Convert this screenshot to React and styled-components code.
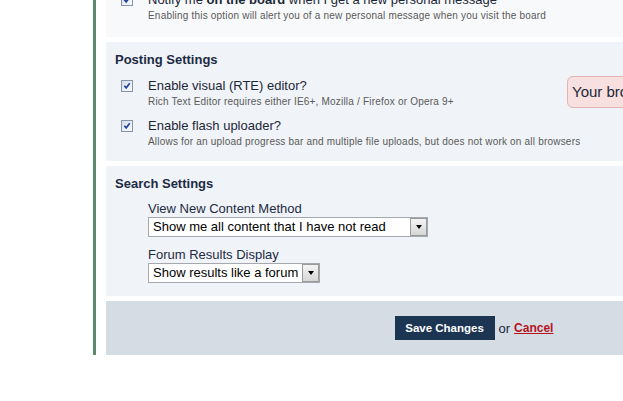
import React from "react";
import styled, { createGlobalStyle } from "styled-components";

const Global = createGlobalStyle`
  html, body { margin: 0; padding: 0; background: #fff; overflow: hidden; }
  body { font-family: "Liberation Sans", Arial, sans-serif; color: #1c2837; }
`;

const Page = styled.div`
  display: flex;
  align-items: flex-start;
  width: 900px;
  height: 401px;
`;

const Gutter = styled.div`
  width: 93px;
  flex: none;
`;

const Main = styled.div`
  border-left: 3px solid #5a8c6c;
  padding-left: 10px;
  width: 736px;
  margin-top: -49px;
  display: flex;
  flex-direction: column;
  gap: 5px;
`;

const Panel = styled.section`
  background: ${(p) => p.$bg || "#f0f3f7"};
  padding: ${(p) => p.$pad || "9px 0 12px 9px"};
  display: flex;
  flex-direction: column;
  position: relative;
`;

const Heading = styled.h3`
  margin: 0 0 8px 0;
  font-size: 13px;
  line-height: 18px;
  font-weight: bold;
  color: #1c2b44;
`;

const Rows = styled.div`
  display: flex;
  flex-direction: column;
  gap: 8px;
`;

const Row = styled.div`
  display: flex;
  align-items: flex-start;
  gap: 15px;
  padding-left: 6px;
`;

const Check = styled.span`
  flex: none;
  margin-top: 3px;
  width: 10px;
  height: 10px;
  border: 1px solid #8493ad;
  background: linear-gradient(135deg, #d5dbe6 0%, #eef1f6 60%, #fbfcfd 100%);
  display: flex;
  align-items: center;
  justify-content: center;
`;

const RowText = styled.div`
  display: flex;
  flex-direction: column;
`;

const Label = styled.div`
  font-size: 13px;
  line-height: 18px;
  color: #1c2837;
  b { font-weight: bold; }
`;

const Sub = styled.div`
  font-size: 10px;
  line-height: 14px;
  color: #5a5a5a;
  letter-spacing: 0.2px;
`;

const Notice = styled.div`
  position: absolute;
  left: 461px;
  top: 34px;
  height: 30px;
  padding: 0 10px 0 4px;
  border: 1px solid #e3b3b6;
  border-radius: 6px;
  background: #f8dfe0;
  font-size: 15px;
  line-height: 30px;
  color: #1c2837;
  white-space: nowrap;
`;

const Field = styled.div`
  padding-left: 33px;
  display: flex;
  flex-direction: column;
  align-items: flex-start;
  margin-bottom: ${(p) => (p.$last ? "0" : "10px")};
`;

const FieldLabel = styled.div`
  font-size: 13px;
  line-height: 16px;
  color: #1c2b44;
`;

const Select = styled.div`
  display: flex;
  align-items: stretch;
  justify-content: space-between;
  width: ${(p) => p.$width}px;
  box-sizing: border-box;
  height: 20px;
  border: 1px solid #a5a9ae;
  background: #fff;
`;

const SelectText = styled.span`
  font-size: 13px;
  line-height: 18px;
  padding: 0 4px 0 4px;
  color: #000;
  white-space: nowrap;
`;

const Arrow = styled.span`
  width: 15px;
  flex: none;
  border: 1px solid #9a9a9a;
  background: linear-gradient(#f4f4f4, #d6d6d6);
  display: flex;
  align-items: center;
  justify-content: center;
  &::after {
    content: "";
    border-left: 3.5px solid transparent;
    border-right: 3.5px solid transparent;
    border-top: 4px solid #000;
  }
`;

const Footer = styled.div`
  background: #d5dce4;
  height: 54px;
  display: flex;
  align-items: center;
  justify-content: center;
  gap: 4px;
`;

const SaveButton = styled.button`
  height: 24px;
  width: 100px;
  background: #1c3553;
  color: #fff;
  border: none;
  font-family: inherit;
  font-weight: bold;
  font-size: 11.5px;
  padding: 0;
  cursor: pointer;
`;

const Or = styled.span`
  color: #1c2837;
  font-size: 13px;
`;

const Cancel = styled.a`
  color: #b5151f;
  font-weight: bold;
  font-size: 12px;
  text-decoration: underline;
`;

const Tick = () => (
  <svg width="8" height="8" viewBox="0 0 9 9">
    <path d="M1.5 4.2 L3.6 6.6 L7.6 1.4" fill="none" stroke="#2743a0" strokeWidth="1.9" />
  </svg>
);

const CheckRow = ({ label, sub }) => (
  <Row>
    <Check><Tick /></Check>
    <RowText>
      <Label>{label}</Label>
      <Sub>{sub}</Sub>
    </RowText>
  </Row>
);

export default function App() {
  return (
    <>
      <Global />
      <Page>
        <Gutter />
        <Main>
          <Panel $bg="#f8f9fb" $pad="0 0 14px 9px">
            <Rows>
              <CheckRow
                label="Some option"
                sub="Description"
              />
              <CheckRow
                label={<>Notify me <b>on the board</b> when I get a new personal message</>}
                sub="Enabling this option will alert you of a new personal message when you visit the board"
              />
            </Rows>
          </Panel>
          <Panel>
            <Heading>Posting Settings</Heading>
            <Rows>
              <CheckRow
                label="Enable visual (RTE) editor?"
                sub="Rich Text Editor requires either IE6+, Mozilla / Firefox or Opera 9+"
              />
              <CheckRow
                label="Enable flash uploader?"
                sub="Allows for an upload progress bar and multiple file uploads, but does not work on all browsers"
              />
            </Rows>
            <Notice>Your browser does not support the rich text editor</Notice>
          </Panel>
          <Panel $pad="9px 0 13px 9px">
            <Heading>Search Settings</Heading>
            <Field>
              <FieldLabel>View New Content Method</FieldLabel>
              <Select $width={280}>
                <SelectText>Show me all content that I have not read</SelectText>
                <Arrow />
              </Select>
            </Field>
            <Field $last>
              <FieldLabel>Forum Results Display</FieldLabel>
              <Select $width={172}>
                <SelectText>Show results like a forum</SelectText>
                <Arrow />
              </Select>
            </Field>
          </Panel>
          <Footer>
            <SaveButton>Save Changes</SaveButton>
            <Or>or</Or>
            <Cancel href="#">Cancel</Cancel>
          </Footer>
        </Main>
      </Page>
    </>
  );
}
